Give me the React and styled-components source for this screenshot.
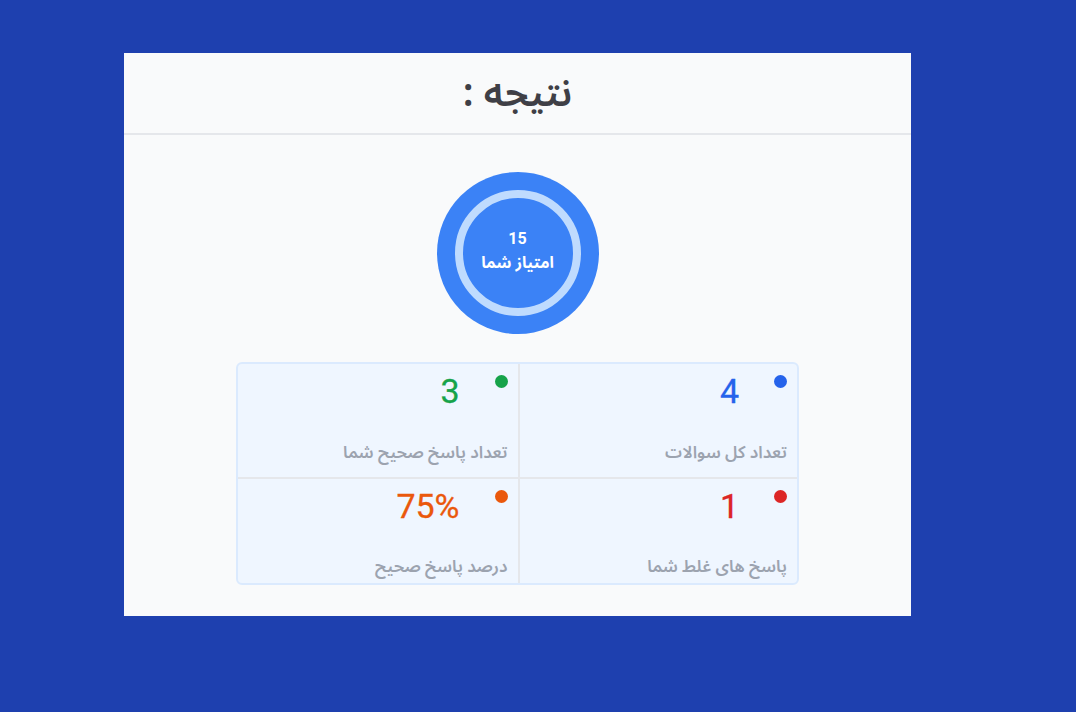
import React from "react";
import styled, { createGlobalStyle } from "styled-components";

const GlobalStyle = createGlobalStyle`
  html, body {
    margin: 0;
    padding: 0;
    background: #1e40af;
  }
  body {
    min-height: 712px;
    font-family: Roboto, "Noto Sans Arabic", "Noto Naskh Arabic", sans-serif;
  }
`;

const Page = styled.div`
  padding: 53px 0 0 124px;
`;

const Card = styled.div`
  width: 787px;
  height: 563px;
  background: #f9fafb;
  direction: rtl;
  display: flex;
  flex-direction: column;
  align-items: center;
`;

const Header = styled.div`
  width: 100%;
  height: 80px;
  border-bottom: 2px solid #e5e7eb;
  display: flex;
  align-items: center;
  justify-content: center;
`;

const Title = styled.h1`
  margin: 0;
  font-size: 39px;
  font-weight: 600;
  color: #3f3f46;
  font-family: "Noto Sans Arabic", "Noto Sans", sans-serif;
`;

const Score = styled.div`
  margin-top: 37px;
  width: 162px;
  height: 162px;
  border-radius: 50%;
  background: #3b82f6;
  display: flex;
  align-items: center;
  justify-content: center;
`;

const Ring = styled.div`
  width: 110px;
  height: 110px;
  border: 8px solid #bfdbfe;
  border-radius: 50%;
  display: flex;
  flex-direction: column;
  align-items: center;
  justify-content: center;
  color: #fff;
  font-weight: 700;
`;

const ScoreValue = styled.div`
  font-size: 16px;
  line-height: 22px;
  margin-top: -2px;
`;

const ScoreLabel = styled.div`
  font-size: 16px;
  line-height: 26px;
`;

const Grid = styled.div`
  margin-top: 28px;
  width: 559px;
  border: 2px solid #dbeafe;
  border-radius: 6px;
  background: #eff6ff;
  display: grid;
  grid-template-columns: 1fr 1fr;
`;

const Cell = styled.div`
  height: ${(p) => p.$h}px;
  padding: 0 10px ${(p) => p.$pb}px 0;
  border-bottom: ${(p) => (p.$last ? "none" : "2px solid #e5e7eb")};
  border-left: ${(p) => (p.$start ? "2px solid #e5e7eb" : "none")};
  display: flex;
  flex-direction: column;
  justify-content: space-between;
  box-sizing: border-box;
`;

const Top = styled.div`
  display: flex;
  align-items: flex-start;
  gap: 35px;
  padding-top: 7px;
`;

const Dot = styled.span`
  width: 13px;
  height: 13px;
  border-radius: 50%;
  background: ${(p) => p.$c};
  margin-top: 4px;
`;

const Value = styled.div`
  direction: ltr;
  font-size: 34px;
  font-weight: 400;
  line-height: 40px;
  color: ${(p) => p.$c};
  -webkit-text-stroke: 0.3px ${(p) => p.$c};
`;

const Label = styled.div`
  font-size: 17px;
  font-weight: 600;
  line-height: 26px;
  color: #9ca3af;
`;

const stats = [
  { label: "تعداد کل سوالات", value: "4", color: "#2563eb" },
  { label: "تعداد پاسخ صحیح شما", value: "3", color: "#16a34a" },
  { label: "پاسخ های غلط شما", value: "1", color: "#dc2626" },
  { label: "درصد پاسخ صحیح", value: "75%", color: "#ea580c" },
];

export default function App() {
  return (
    <>
      <GlobalStyle />
      <Page>
        <Card>
          <Header>
            <Title>نتیجه :</Title>
          </Header>
          <Score>
            <Ring>
              <ScoreValue>15</ScoreValue>
              <ScoreLabel>امتیاز شما</ScoreLabel>
            </Ring>
          </Score>
          <Grid>
            {stats.map((s, i) => (
              <Cell
                key={s.label}
                $h={i < 2 ? 115 : 104}
                $pb={i < 2 ? 12 : 4}
                $start={i % 2 === 0}
                $last={i >= 2}
              >
                <Top>
                  <Dot $c={s.color} />
                  <Value $c={s.color}>{s.value}</Value>
                </Top>
                <Label>{s.label}</Label>
              </Cell>
            ))}
          </Grid>
        </Card>
      </Page>
    </>
  );
}
